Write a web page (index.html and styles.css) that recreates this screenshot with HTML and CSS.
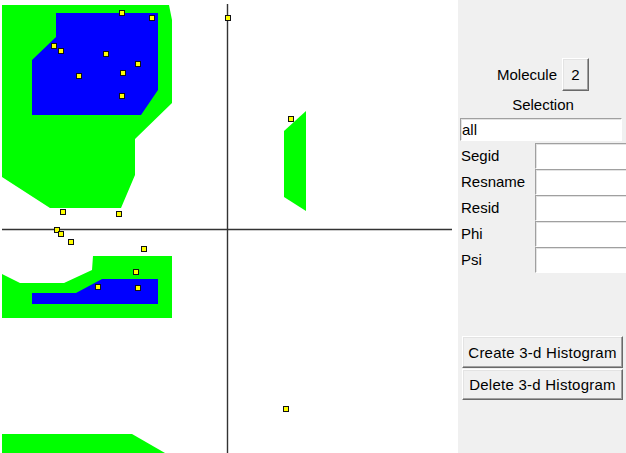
FILE: index.html
```html
<!DOCTYPE html>
<html>
<head>
<meta charset="utf-8">
<link rel="stylesheet" href="styles.css">
</head>
<body>
<div class="app">
  <div class="canvas">
    <svg width="458" height="453" viewBox="0 0 458 453">
      <g class="green">
        <polygon points="2,5 169,5 172,20 172,103 135,139 135,175 121,208 50,208 2,177"/>
        <polygon points="2,274 20,283 64,283 92,270 93,256 172,256 172,318 2,318"/>
        <polygon points="284,131 306,111 306,211 284,197"/>
        <polygon points="2,434 132,434 165,453 2,453"/>
      </g>
      <g class="blue">
        <polygon points="56,13 158,13 158,90 141,115 32,115 32,60 56,37"/>
        <polygon points="32,293 76,293 102,279 158,279 158,304 32,304"/>
      </g>
      <g class="axis">
        <line x1="2" y1="229.5" x2="452" y2="229.5"/>
        <line x1="227.5" y1="4" x2="227.5" y2="453"/>
      </g>
      <g class="pts">
        <rect x="119.5" y="10.5" width="5" height="5"/>
        <rect x="149.5" y="15.5" width="5" height="5"/>
        <rect x="225.5" y="15.5" width="5" height="5"/>
        <rect x="51.5" y="43.5" width="5" height="5"/>
        <rect x="58.5" y="48.5" width="5" height="5"/>
        <rect x="103.5" y="51.5" width="5" height="5"/>
        <rect x="135.5" y="61.5" width="5" height="5"/>
        <rect x="120.5" y="70.5" width="5" height="5"/>
        <rect x="76.5" y="73.5" width="5" height="5"/>
        <rect x="119.5" y="93.5" width="5" height="5"/>
        <rect x="288.5" y="116.5" width="5" height="5"/>
        <rect x="60.5" y="209.5" width="5" height="5"/>
        <rect x="116.5" y="211.5" width="5" height="5"/>
        <rect x="54.5" y="227.5" width="5" height="5"/>
        <rect x="58.5" y="231.5" width="5" height="5"/>
        <rect x="68.5" y="239.5" width="5" height="5"/>
        <rect x="141.5" y="246.5" width="5" height="5"/>
        <rect x="133.5" y="269.5" width="5" height="5"/>
        <rect x="95.5" y="284.5" width="5" height="5"/>
        <rect x="135.5" y="285.5" width="5" height="5"/>
        <rect x="283.5" y="406.5" width="5" height="5"/>
      </g>
    </svg>
  </div>
  <div class="panel">
    <div class="mol-row">
      <span class="mol-label">Molecule</span>
      <button class="btn btn-num">2</button>
    </div>
    <div class="sel-label">Selection</div>
    <div class="entry entry-all">all</div>
    <div class="fields">
      <div class="field-label">Segid</div><div class="entry entry-field"></div>
      <div class="field-label">Resname</div><div class="entry entry-field"></div>
      <div class="field-label">Resid</div><div class="entry entry-field"></div>
      <div class="field-label">Phi</div><div class="entry entry-field"></div>
      <div class="field-label">Psi</div><div class="entry entry-field"></div>
    </div>
    <div class="actions">
      <button class="btn btn-wide btn-create">Create 3-d Histogram</button>
      <button class="btn btn-wide btn-delete">Delete 3-d Histogram</button>
    </div>
  </div>
</div>
</body>
</html>
```

FILE: styles.css
```css
html, body {
  margin: 0;
  padding: 0;
  overflow: hidden;
  background: #f0f0f0;
}

.app {
  display: flex;
  width: 626px;
  height: 453px;
  font-family: "Liberation Sans", Arial, sans-serif;
  font-size: 15px;
  color: #000;
}

.canvas {
  width: 458px;
  height: 453px;
  flex: none;
  background: #fff;
}

.canvas svg {
  display: block;
}

.green polygon {
  fill: #00ff00;
}

.blue polygon {
  fill: #0000ff;
}

.axis line {
  stroke: #333;
  stroke-width: 1.4;
}

.pts rect {
  fill: #ffff00;
  stroke: #111;
  stroke-width: 1;
  filter: drop-shadow(0 0 0.6px rgba(0, 0, 0, 0.45));
}

.panel {
  flex: 1;
  background: #f0f0f0;
  padding: 58px 0 0 2px;
  overflow: hidden;
  display: flex;
  flex-direction: column;
}

.mol-row {
  height: 33px;
  display: flex;
  align-items: center;
  justify-content: center;
  gap: 5px;
}

.btn {
  font-family: inherit;
  font-size: 15px;
  color: #000;
  background: #f0f0f0;
  border-style: solid;
  border-width: 1px;
  border-color: #fff #696969 #696969 #fff;
  box-shadow: inset -1px -1px 0 #a0a0a0, inset 1px 1px 0 #e3e3e3;
  padding: 0;
  margin: 0;
  box-sizing: border-box;
  line-height: 1;
}

.btn-num {
  width: 27px;
  height: 33px;
}

.sel-label {
  margin-top: 2px;
  height: 24px;
  line-height: 24px;
  text-align: center;
}

.entry {
  box-sizing: border-box;
  background: #fff;
  border-style: solid;
  border-width: 1px;
  border-color: #a0a0a0 #ffffff #ffffff #a0a0a0;
  box-shadow: inset 1px 1px 0 #e3e3e3;
}

.entry-all {
  margin-top: 1px;
  width: 162px;
  height: 23px;
  line-height: 21px;
  padding-left: 1px;
}

.fields {
  margin-top: 2px;
  display: grid;
  grid-template-columns: 75px 100px;
  grid-auto-rows: 26px;
}

.field-label {
  padding-left: 1px;
  line-height: 26px;
}

.entry-field {
  height: 26px;
  width: 100px;
}

.actions {
  margin-top: 63px;
  margin-left: 2px;
  display: flex;
  flex-direction: column;
  gap: 1px;
}

.btn-wide {
  width: 161px;
  letter-spacing: 0.25px;
}

.btn-create {
  height: 32px;
}

.btn-delete {
  height: 31px;
}
```
